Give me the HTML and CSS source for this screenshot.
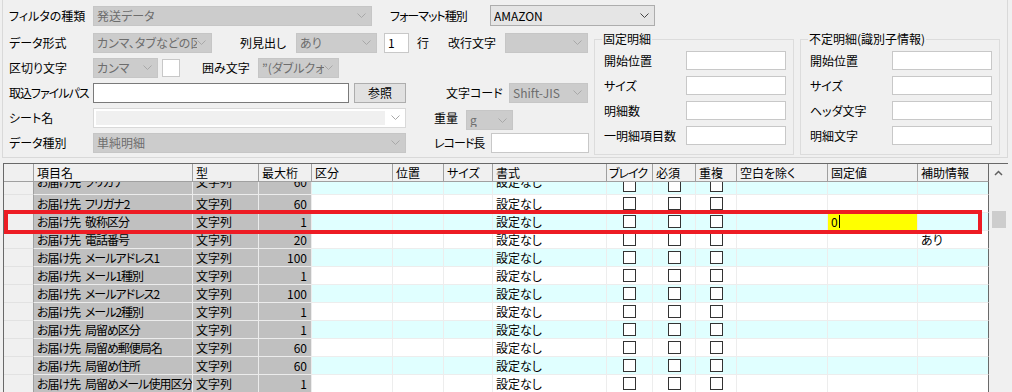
FILE: index.html
```html
<!DOCTYPE html>
<html>
<head>
<meta charset="utf-8">
<title>取込設定</title>
<link rel="stylesheet" href="styles.css">
<script>
window.onload=function(){
	var oRows = document.getElementById('rows');
	//項目名, 最大桁
	var aData = [
		['お届け先 フリガナ','60'],
		['お届け先 フリガナ2','60'],
		['お届け先 敬称区分','1'],
		['お届け先 電話番号','20'],
		['お届け先 メールアドレス1','100'],
		['お届け先 メール1種別','1'],
		['お届け先 メールアドレス2','100'],
		['お届け先 メール2種別','1'],
		['お届け先 局留め区分','1'],
		['お届け先 局留め郵便局名','60'],
		['お届け先 局留め住所','60'],
		['お届け先 局留めメール使用区分','1']
	];
	var html = '';
	for(var i=0;i<aData.length;i++){
		var kotei = '<div class="c"></div>';
		var hojo = '<div class="c"></div>';
		//敬称区分の固定値は編集中
		if(i==2){
			kotei = '<div class="c yel">0<span class="caret"></span></div>';
		}
		if(i==3){
			hojo = '<div class="c">あり</div>';
		}
		var cls = 'brow';
		if(i%2==0) cls += ' cy';
		//一行目は上が隠れている
		if(i==0) cls += ' part';
		html += '<div class="'+cls+'">'+
			'<div class="rh"></div>'+
			'<div class="g name">'+aData[i][0]+'</div>'+
			'<div class="g">文字列</div>'+
			'<div class="g num">'+aData[i][1]+'</div>'+
			'<div class="c"></div><div class="c"></div><div class="c"></div>'+
			'<div class="c">設定なし</div>'+
			'<div class="c ck"><span class="chk"></span></div>'+
			'<div class="c ck"><span class="chk"></span></div>'+
			'<div class="c ck"><span class="chk"></span></div>'+
			'<div class="c"></div>'+kotei+hojo+
			'</div>';
	}
	oRows.innerHTML = html;
};
</script>
</head>

<body>
<div class="panel">
	<div class="row">
		<span class="lbl w84">フィルタの種類</span>
		<div class="cmb w279"><span>発送データ</span><svg width="9" height="5" viewBox="0 0 9 5"><polyline points="0.5,0.5 4.5,4.5 8.5,0.5"/></svg></div>
		<span class="lbl w100 ml18 tight">フォーマット種別</span>
		<div class="cmb act w165"><span>AMAZON</span><svg width="9" height="5" viewBox="0 0 9 5"><polyline points="0.5,0.5 4.5,4.5 8.5,0.5"/></svg></div>
	</div>
	<div class="lower">
		<div class="form">
			<div class="row">
				<span class="lbl w84">データ形式</span>
				<div class="cmb w119"><span>カンマ、タブなどの区ｷ</span><svg width="9" height="5" viewBox="0 0 9 5"><polyline points="0.5,0.5 4.5,4.5 8.5,0.5"/></svg></div>
				<span class="lbl w56 ml28">列見出し</span>
				<div class="cmb w81"><span>あり</span><svg width="9" height="5" viewBox="0 0 9 5"><polyline points="0.5,0.5 4.5,4.5 8.5,0.5"/></svg></div>
				<div class="txt w25 ml7">1</div>
				<span class="lbl w31 ml8">行</span>
				<span class="lbl w57">改行文字</span>
				<div class="cmb w83"><span></span><svg width="9" height="5" viewBox="0 0 9 5"><polyline points="0.5,0.5 4.5,4.5 8.5,0.5"/></svg></div>
			</div>
			<div class="row">
				<span class="lbl w84">区切り文字</span>
				<div class="cmb w65"><span>カンマ</span><svg width="9" height="5" viewBox="0 0 9 5"><polyline points="0.5,0.5 4.5,4.5 8.5,0.5"/></svg></div>
				<div class="txt sq ml4"></div>
				<span class="lbl w56 ml22">囲み文字</span>
				<div class="cmb w81"><span>”(ダブルクォ</span><svg width="9" height="5" viewBox="0 0 9 5"><polyline points="0.5,0.5 4.5,4.5 8.5,0.5"/></svg></div>
			</div>
			<div class="row">
				<span class="lbl w84 tight">取込ファイルパス</span>
				<div class="txt dark w256"></div>
				<div class="btn w52 ml5">参照</div>
				<span class="lbl w63 ml40">文字コード</span>
				<div class="cmb w79"><span>Shift-JIS</span><svg width="9" height="5" viewBox="0 0 9 5"><polyline points="0.5,0.5 4.5,4.5 8.5,0.5"/></svg></div>
			</div>
			<div class="row">
				<span class="lbl w84">シート名</span>
				<div class="cmb white w313"><span class="fill"></span><svg width="9" height="5" viewBox="0 0 9 5"><polyline points="0.5,0.5 4.5,4.5 8.5,0.5"/></svg></div>
				<span class="lbl w32 ml28">重量</span>
				<div class="cmb w47 low"><span>g</span><svg width="9" height="5" viewBox="0 0 9 5"><polyline points="0.5,0.5 4.5,4.5 8.5,0.5"/></svg></div>
			</div>
			<div class="row">
				<span class="lbl w84">データ種別</span>
				<div class="cmb w313"><span>単純明細</span><svg width="9" height="5" viewBox="0 0 9 5"><polyline points="0.5,0.5 4.5,4.5 8.5,0.5"/></svg></div>
				<span class="lbl w57 ml28 tight">レコード長</span>
				<div class="txt w98"></div>
			</div>
		</div>
		<fieldset class="grp">
			<legend>固定明細</legend>
			<div class="ginner">
				<div class="grow"><span class="lbl w82">開始位置</span><div class="txt w100"></div></div>
				<div class="grow"><span class="lbl w82">サイズ</span><div class="txt w100"></div></div>
				<div class="grow"><span class="lbl w82">明細数</span><div class="txt w100"></div></div>
				<div class="grow"><span class="lbl w82">一明細項目数</span><div class="txt w100"></div></div>
			</div>
		</fieldset>
		<fieldset class="grp ml6">
			<legend>不定明細(識別子情報)</legend>
			<div class="ginner">
				<div class="grow"><span class="lbl w82">開始位置</span><div class="txt w100"></div></div>
				<div class="grow"><span class="lbl w82">サイズ</span><div class="txt w100"></div></div>
				<div class="grow"><span class="lbl w82">ヘッダ文字</span><div class="txt w100"></div></div>
				<div class="grow"><span class="lbl w82">明細文字</span><div class="txt w100"></div></div>
			</div>
		</fieldset>
	</div>
</div>

<div class="grid">
	<div class="cells">
		<div class="hrow">
			<div></div>
			<div>項目名</div>
			<div>型</div>
			<div>最大桁</div>
			<div>区分</div>
			<div>位置</div>
			<div>サイズ</div>
			<div>書式</div>
			<div class="tight">ブレイク</div>
			<div>必須</div>
			<div>重複</div>
			<div>空白を除く</div>
			<div>固定値</div>
			<div>補助情報</div>
		</div>
		<div class="gbody"><div id="rows" class="rows"></div></div>
	</div>
	<div class="vscroll">
		<div class="up"><svg width="9" height="6" viewBox="0 0 9 6"><polyline points="1,5 4.5,1.5 8,5"/></svg></div>
		<div class="thumb"></div>
	</div>
	<div class="mark"></div>
</div>
</body>
</html>
```

FILE: styles.css
```css
*{margin:0; padding:0; box-sizing:border-box;}
html,body{height:392px; overflow:hidden;}
body{background:#f0f0f0; font-family:"Noto Sans CJK JP","Noto Sans",sans-serif; font-size:12px; line-height:14px; color:#000; font-feature-settings:"palt";}

/* 上の設定パネル */
.panel{margin-left:2px; width:1006px; border:1px solid #d9d9d9; border-top:none; padding:3px 0 2px 6px;}
.row{display:flex; align-items:center; height:25px;}
.lower{display:flex; margin-top:2px;}
.form{width:585px; flex:none;}
.lbl{flex:none; white-space:nowrap;}
.lbl.tight{letter-spacing:-1px;}

.cmb{flex:none; display:flex; align-items:center; justify-content:space-between; height:20px; padding:0 5px 0 3px; border:1px solid #c6c6c6; background:#ccc; color:#6d6d6d; white-space:nowrap; overflow:hidden;}
.cmb span{overflow:hidden;}
.cmb svg{flex:none; fill:none; stroke:#a8a8a8; stroke-width:1;}
.cmb.act{height:21px; background:#e5e5e5; border-color:#adadad; color:#000;}
.cmb.act svg{stroke:#444;}
.cmb.white{background:#fff; border-color:#d9d9d9; padding-left:2px;}
.cmb.white .fill{width:289px; height:14px; background:#f0f0f0;}
.cmb.low{align-self:flex-end;}

.txt{flex:none; height:20px; background:#fff; border:1px solid #c8c8c8; padding:0 3px; display:flex; align-items:center;}
.txt.dark{border-color:#7a7a7a;}
.txt.sq{width:18px; height:18px;}
.btn{flex:none; height:20px; background:#e1e1e1; border:1px solid #adadad; display:flex; align-items:center; justify-content:center;}

/* グループボックス */
.grp{flex:none; width:200px; margin-top:3px; border:1px solid #dcdcdc; min-width:0;}
.grp legend{margin-left:7px; padding:0 1px; line-height:12px;}
.ginner{display:flex; flex-direction:column; gap:6px; padding:6px 0 7px 9px;}
.grow{display:flex; align-items:center; height:19px;}
.grow .txt{height:19px;}

.w25{width:25px;} .w31{width:31px;} .w32{width:32px;} .w47{width:47px;} .w52{width:52px;}
.w56{width:56px;} .w57{width:57px;} .w63{width:63px;} .w65{width:65px;} .w79{width:79px;}
.w81{width:81px;} .w82{width:82px;} .w83{width:83px;} .w84{width:84px;} .w98{width:98px;}
.w100{width:100px;} .w119{width:119px;} .w165{width:165px;} .w256{width:256px;} .w279{width:279px;} .w313{width:313px;}
.ml4{margin-left:4px;} .ml5{margin-left:5px;} .ml6{margin-left:6px;} .ml7{margin-left:7px;} .ml8{margin-left:8px;}
.ml18{margin-left:18px;} .ml22{margin-left:22px;} .ml28{margin-left:28px;} .ml40{margin-left:40px;}

/* 明細グリッド */
.grid{position:relative; display:flex; margin:5px 0 0 3px; width:1005px; height:229px; border-top:1px solid #696969; border-left:1px solid #696969; overflow:hidden;}
.cells{width:985px; flex:none;}
.hrow,.brow{display:grid; grid-template-columns:30px 159px 66px 53px 81px 51px 49px 114px 46px 43px 41px 91px 90px 71px;}
.hrow div{height:18px; padding:0 2px 0 3px; display:flex; align-items:center; background:#f0f0f0; border-right:1px solid #a0a0a0; border-bottom:1px solid #a0a0a0; white-space:nowrap; overflow:hidden;}
.hrow div.tight{padding:0 0 0 2px; letter-spacing:-1px;}
.hrow div:last-child{border-right-color:#696969;}
.gbody{height:210px; overflow:hidden;}
.rows{margin-top:-5px;}
.brow div{height:18px; padding:0 3px; display:flex; align-items:center; background:#fff; border-right:1px solid #ededed; border-bottom:1px solid #ededed; white-space:nowrap; overflow:hidden; word-spacing:3px;}
.brow.part div{padding-bottom:7px;}
.brow.part div.ck{padding-bottom:0;}
.brow .rh{background:#f0f0f0; border-right-color:#a0a0a0; border-bottom-color:#e2e2e2;}
.brow .g{background:#c0c0c0; border-color:#ececec;}
.brow .name{letter-spacing:-1px;}
.brow .num{justify-content:flex-end; padding-right:4px;}
.brow.cy .c{background:#e0ffff;}
.brow .ck{justify-content:center;}
.brow div:last-child{border-right-color:#696969;}
.brow .yel,.brow.cy .yel{background:#ff0;}
.chk{width:13px; height:13px; border:1px solid #333; background:#fff;}
.caret{display:inline-block; width:1px; height:13px; background:#000; margin-left:1px;}

.vscroll{flex:none; width:19px; background:#f0f0f0; display:flex; flex-direction:column; align-items:center;}
.vscroll .up{height:17px; display:flex; align-items:center; justify-content:center;}
.vscroll .up svg{fill:none; stroke:#606060; stroke-width:1.5;}
.thumb{width:14px; height:17px; margin-top:30px; background:#cdcdcd;}

/* 選択行の赤枠 */
.mark{position:absolute; left:0; top:46px; width:978px; height:24px; border:4px solid #ed1c24;}
```
